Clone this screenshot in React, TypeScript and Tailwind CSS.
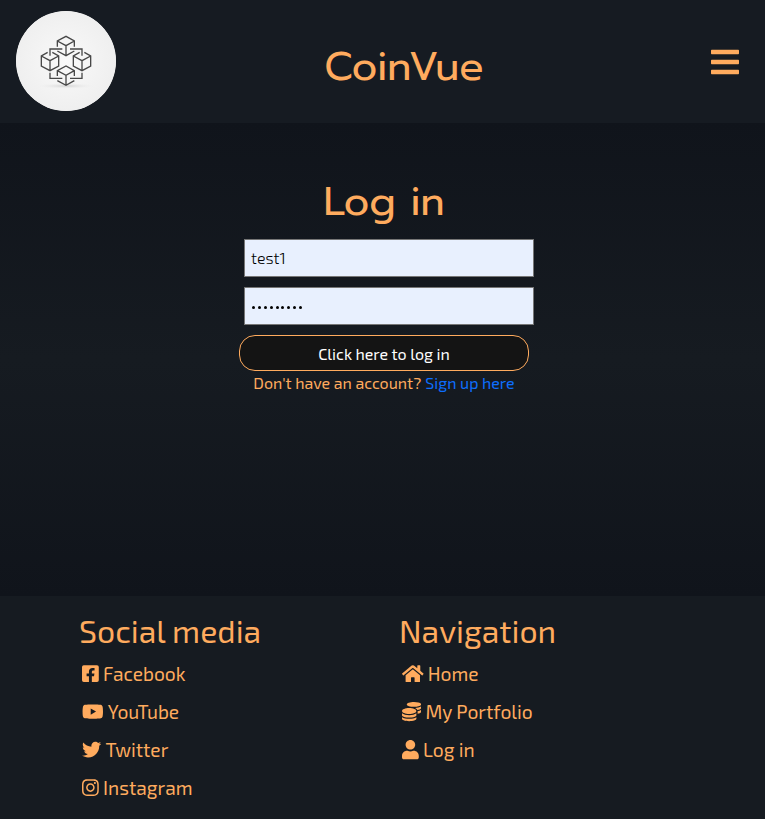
import type { ReactNode } from "react";
import {
  FaBars,
  FaCoins,
  FaFacebookSquare,
  FaHome,
  FaInstagram,
  FaTwitter,
  FaUser,
  FaYoutube,
} from "react-icons/fa";

function Logo() {
  return (
    <svg viewBox="48 33 300 300" className="mb-0.5 size-[100px] rounded-full bg-[#f2f2f2]">
      <defs>
        <radialGradient id="glow">
          <stop offset="0" stopColor="#f9f9f9" />
          <stop offset="1" stopColor="#efefef" />
        </radialGradient>
        <radialGradient id="shade">
          <stop offset="0" stopColor="#d2d2d2" />
          <stop offset="1" stopColor="#f2f2f2" stopOpacity="0" />
        </radialGradient>
      </defs>
      <circle cx="198" cy="183" r="150" fill="url(#glow)" />
      <ellipse cx="198" cy="258" rx="90" ry="9" fill="url(#shade)" />
      <g fill="none" stroke="#484848" strokeWidth="4">
        <path d="M172 140V123L198 109L223 123V140M172 123L198 137L223 123M198 137V167M172 153L198 167L223 153" />
        <path d="M143 157L124 168V198L150 212L176 198V168L157 157M124 168L150 182L176 168M150 182V212" />
        <path d="M239 157L220 168V198L246 212L272 198V168L253 157M220 168L246 182L272 168M246 182V212" />
        <path d="M172 228V212L198 198L223 212V228M172 212L198 226L223 212M198 226V256M172 242L198 256L223 242" />
        <path d="M187 147H150V167M210 147H246V167M150 218V235H187M246 218V235H210" />
      </g>
    </svg>
  );
}

function FooterLink({ icon, children }: { icon: ReactNode; children: ReactNode }) {
  return (
    <a className="flex h-[38px] items-center gap-[4.2px] text-[19.2px]">
      {icon}
      {children}
    </a>
  );
}

export default function App() {
  return (
    <div className="flex h-[819px] w-[765px] flex-col overflow-hidden bg-[#161b21] font-['Exo_2','Open_Sans',sans-serif] text-[#ffab5e]">
      <header className="flex h-[123px] shrink-0 items-center justify-between bg-[#161b22] px-4">
        <Logo />
        <h1 className="pt-2.5 pr-[17px] text-center font-['Prompt','Lato',sans-serif] text-[40px] leading-none">
          CoinVue
        </h1>
        <FaBars className="mr-2 size-8" />
      </header>
      <main className="flex h-[473px] shrink-0 flex-col items-center bg-linear-to-b from-[#10141b] via-[#161b21] to-[#10141b] pt-12 pl-[3px]">
        <h2 className="mb-[7px] flex h-[61px] items-center font-['Prompt','Lato',sans-serif] text-[40px]">
          Log in
        </h2>
        <form className="flex w-[290px] flex-col">
          <div className="ml-[5px] flex h-[38px] w-[290px] items-center border border-[#767676] bg-[#e8f0fe] px-1.5 text-base font-light text-black">
            test1
          </div>
          <div className="mt-2.5 ml-[5px] flex h-[38px] w-[290px] items-center gap-[2.9px] border border-[#767676] bg-[#e8f0fe] px-[7px] pt-[3px]">
            {Array.from({ length: 9 }, (_, i) => (
              <i key={i} className="size-[3px] rounded-full bg-black" />
            ))}
          </div>
          <button type="button" className="mt-2.5 flex h-9 items-center justify-center rounded-[16px] border border-[#ffab5e] bg-[#141414] pt-0.5 text-base text-white">
            Click here to log in
          </button>
        </form>
        <p className="flex h-[23px] items-center gap-1 whitespace-nowrap text-base">
          <span>Don't have an account?</span>
          <a className="text-[#0d6efd]">Sign up here</a>
        </p>
      </main>
      <footer className="grid grow grid-cols-[320px_1fr] bg-[#161b21] pt-3 pl-[79px]">
        <section>
          <h3 className="mb-1 flex h-[43px] items-center text-[32px]">Social media</h3>
          <div className="pl-[3px]">
            <FooterLink icon={<FaFacebookSquare className="h-[19.2px] w-[16.8px]" />}>Facebook</FooterLink>
            <FooterLink icon={<FaYoutube className="h-[19.2px] w-[21.6px]" />}>YouTube</FooterLink>
            <FooterLink icon={<FaTwitter className="size-[19.2px]" />}>Twitter</FooterLink>
            <FooterLink icon={<FaInstagram className="h-[19.2px] w-[16.8px]" />}>Instagram</FooterLink>
          </div>
        </section>
        <section>
          <h3 className="mb-1 flex h-[43px] items-center text-[32px]">Navigation</h3>
          <div className="pl-[3px]">
            <FooterLink icon={<FaHome className="h-[19.2px] w-[21.6px]" />}>Home</FooterLink>
            <FooterLink icon={<FaCoins className="size-[19.2px]" />}>My Portfolio</FooterLink>
            <FooterLink icon={<FaUser className="h-[19.2px] w-[16.8px]" />}>Log in</FooterLink>
          </div>
        </section>
      </footer>
    </div>
  );
}
